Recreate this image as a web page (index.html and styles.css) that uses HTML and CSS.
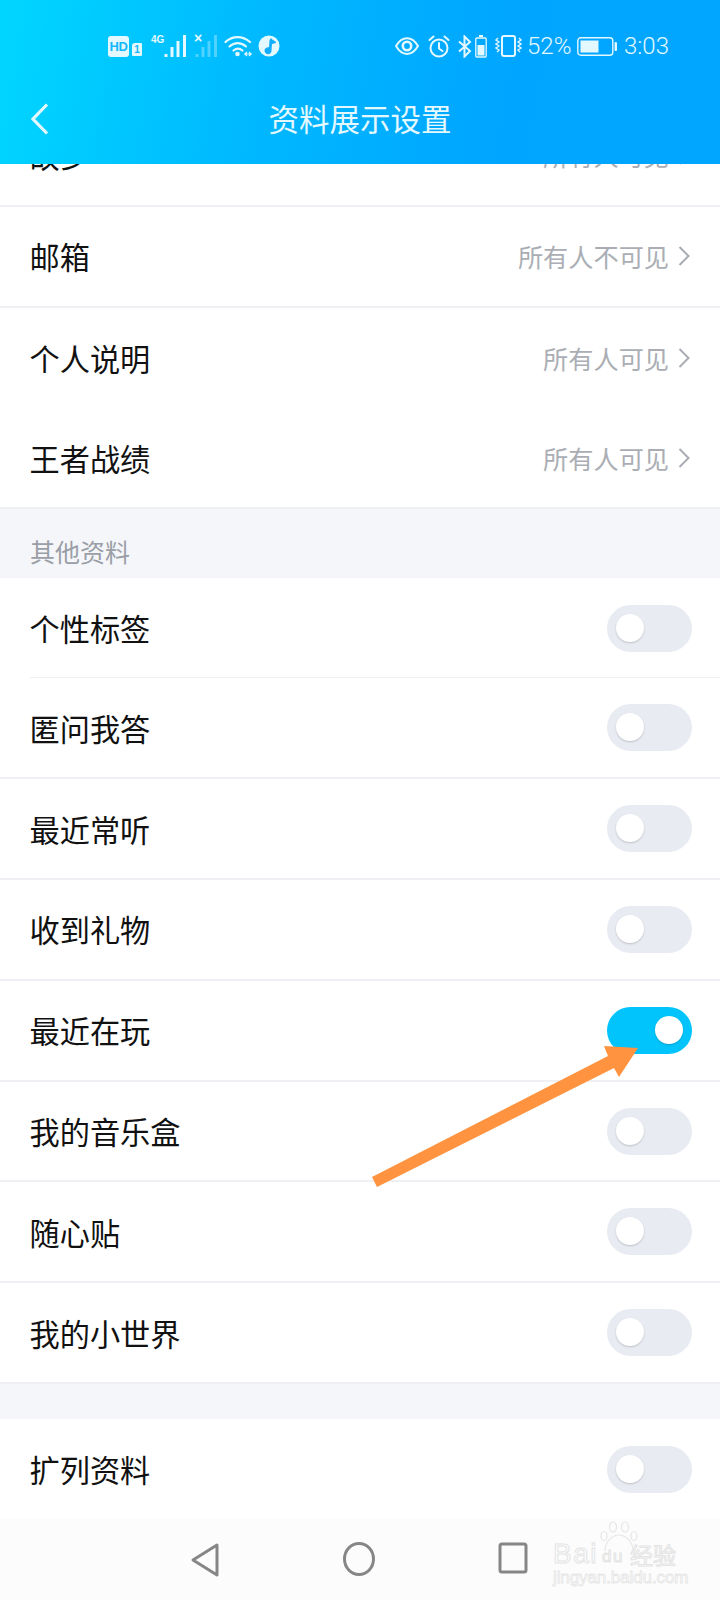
FILE: index.html
```html
<!DOCTYPE html>
<html lang="zh-CN">
<head>
<meta charset="utf-8">
<title>资料展示设置</title>
<link rel="stylesheet" href="styles.css">
</head>
<body>
<div class="phone">
  <header class="header">
    <div class="status">
      <div class="status-group">
        <span class="hd">HD</span>
        <span class="sim">1</span>
        <span class="net"><span class="net-label">4G</span>
          <svg width="24" height="23" viewBox="0 0 24 23"><path d="M2 19v3M8 12v10M14 6v16M20.500 0v22" stroke="#e3f8ff" stroke-width="3" fill="none"/></svg>
        </span>
        <span class="net net-off"><span class="net-x">×</span>
          <svg width="24" height="23" viewBox="0 0 24 23"><path d="M2 19v3M8 12v10M14 6v16M20.500 0v22" stroke="#e3f8ff" stroke-width="3" fill="none" opacity=".35"/></svg>
        </span>
        <svg class="wifi" width="28" height="22" viewBox="0 0 28 22"><g fill="none" stroke="#e3f8ff" stroke-width="2.200" stroke-linecap="round"><path d="M1.500 7C8.500 .5 18.500 .5 26 7"/><path d="M5.500 11.500c5-4.500 11.500-4.500 16.500 0"/><path d="M9.500 15.500c3-2.400 6-2.400 9 0"/></g><circle cx="13.500" cy="19" r="2.300" fill="#e3f8ff"/><path d="M20 19h8M23 17l-2 2 2 2M25 17l2 2-2 2" stroke="#e3f8ff" stroke-width="1.200" fill="none"/></svg>
        <svg class="globe" width="22" height="22" viewBox="0 0 22 22"><circle cx="11" cy="11" r="10.500" fill="#e3f8ff"/><path d="M13 3c2 3 5 2.500 5 5l-4 1-.5 6.500a3.500 3.500 0 1 1-2.500-3.200l.5-7z" fill="#12aefc"/></svg>
      </div>
      <div class="status-group status-right">
        <svg width="24" height="18" viewBox="0 0 24 18"><path d="M1 9c6-10.500 16-10.500 22 0C17 19.500 7 19.500 1 9z" fill="none" stroke="#e3f8ff" stroke-width="2"/><circle cx="12" cy="9" r="4.200" fill="none" stroke="#e3f8ff" stroke-width="2.600"/></svg>
        <svg class="alarm" width="22" height="23" viewBox="0 0 22 23"><g fill="none" stroke="#e3f8ff" stroke-width="2" stroke-linecap="round"><circle cx="11" cy="13" r="8.500"/><path d="M11 8v5.500l3.500 2.500M1.500 5 5.500 1.500M20.500 5l-4-3.500"/></g></svg>
        <svg class="bt" width="15" height="23" viewBox="0 0 15 23"><path d="M1 6.500 12 16l-5.500 5.500v-20L12 7 1 16.500" fill="none" stroke="#e3f8ff" stroke-width="2"/></svg>
        <svg class="mini-batt" width="12" height="23" viewBox="0 0 12 23"><path d="M4 1h4" stroke="#e3f8ff" stroke-width="2"/><rect x=".8" y="3" width="10.400" height="19" rx="1" fill="none" stroke="#e3f8ff" stroke-width="1.300"/><rect x="2.500" y="10" width="7" height="10.500" fill="#e3f8ff"/></svg>
        <svg class="vib" width="27" height="22" viewBox="0 0 27 22"><rect x="7" y="1" width="13" height="20" rx="2" fill="none" stroke="#e3f8ff" stroke-width="2"/><path d="M3 3 1 5l3 2-3 2 3 2-3 2 3 2-2 2M24 3l2 2-3 2 3 2-3 2 3 2-3 2 2 2" fill="none" stroke="#e3f8ff" stroke-width="1.400"/></svg>
        <span class="pct">52%</span>
        <svg class="batt" width="40" height="19" viewBox="0 0 40 19"><rect x=".8" y=".8" width="35" height="17.400" rx="3" fill="none" stroke="#e3f8ff" stroke-width="1.400"/><rect x="3.500" y="3.500" width="18" height="12" fill="#e3f8ff"/><rect x="37.500" y="5" width="2.500" height="9" rx="1" fill="#e3f8ff"/></svg>
        <span class="clock">3:03</span>
      </div>
    </div>
    <div class="titlebar">
      <svg class="back" width="18" height="32" viewBox="0 0 18 32"><path d="M16 1.500 2 16l14 14.500" fill="none" stroke="#e3f8ff" stroke-width="3.200"/></svg>
      <h1 class="title">资料展示设置</h1>
    </div>
  </header>

  <main class="list">
    <div class="row row-first row-line"><span class="label">故乡</span><span class="value">所有人可见<svg class="chev" width="12" height="20" viewBox="0 0 12 20"><path d="M1.500 1 10.500 10l-9 9" fill="none" stroke="#a9adb3" stroke-width="2"/></svg></span></div>
    <div class="row row-line"><span class="label">邮箱</span><span class="value">所有人不可见<svg class="chev" width="12" height="20" viewBox="0 0 12 20"><path d="M1.500 1 10.500 10l-9 9" fill="none" stroke="#a9adb3" stroke-width="2"/></svg></span></div>
    <div class="row"><span class="label">个人说明</span><span class="value">所有人可见<svg class="chev" width="12" height="20" viewBox="0 0 12 20"><path d="M1.500 1 10.500 10l-9 9" fill="none" stroke="#a9adb3" stroke-width="2"/></svg></span></div>
    <div class="row row-line"><span class="label">王者战绩</span><span class="value">所有人可见<svg class="chev" width="12" height="20" viewBox="0 0 12 20"><path d="M1.500 1 10.500 10l-9 9" fill="none" stroke="#a9adb3" stroke-width="2"/></svg></span></div>

    <div class="section">其他资料</div>

    <div class="row row-inset"><span class="label">个性标签</span><span class="toggle"><span class="knob"></span></span></div>
    <div class="row row-line"><span class="label">匿问我答</span><span class="toggle"><span class="knob"></span></span></div>
    <div class="row row-line"><span class="label">最近常听</span><span class="toggle"><span class="knob"></span></span></div>
    <div class="row row-line"><span class="label">收到礼物</span><span class="toggle"><span class="knob"></span></span></div>
    <div class="row row-line"><span class="label">最近在玩</span><span class="toggle toggle-on"><span class="knob"></span></span></div>
    <div class="row row-line"><span class="label">我的音乐盒</span><span class="toggle"><span class="knob"></span></span></div>
    <div class="row row-line"><span class="label">随心贴</span><span class="toggle"><span class="knob"></span></span></div>
    <div class="row row-line"><span class="label">我的小世界</span><span class="toggle"><span class="knob"></span></span></div>

    <div class="spacer"></div>

    <div class="row"><span class="label">扩列资料</span><span class="toggle"><span class="knob"></span></span></div>
  </main>

  <nav class="navbar">
    <svg width="30" height="36" viewBox="0 0 30 36"><path d="M27 3 3 18l24 15z" fill="none" stroke="#868686" stroke-width="3" stroke-linejoin="round"/></svg>
    <svg width="32" height="34" viewBox="0 0 32 34"><ellipse cx="16" cy="17" rx="14.500" ry="15.500" fill="none" stroke="#868686" stroke-width="3"/></svg>
    <svg width="30" height="32" viewBox="0 0 30 32"><rect x="2" y="2" width="26" height="28" rx="2" fill="none" stroke="#868686" stroke-width="3"/></svg>
  </nav>

  <svg class="arrow" width="720" height="1600" viewBox="0 0 720 1600"><polygon points="372,1177 608,1056 604,1046 638,1048 619,1077 614,1068 377,1187" fill="#ff9340"/></svg>

  <div class="mark">
    <svg class="paw" width="40" height="32" viewBox="0 0 40 32"><g fill="none" stroke="#e6e6e6" stroke-width="1.200"><ellipse cx="5" cy="15" rx="3" ry="4.500"/><ellipse cx="14" cy="6" rx="3.500" ry="5"/><ellipse cx="26" cy="6" rx="3.500" ry="5"/><ellipse cx="35" cy="15" rx="3" ry="4.500"/><path d="M6 30c0-11 9-16 14-16s14 5 14 16"/></g></svg>
    <div class="mark-main"><span>Bai</span><span class="mark-du">du</span><span class="mark-cn">经验</span></div>
    <div class="mark-url">jingyan.baidu.com</div>
  </div>
</div>
</body>
</html>
```
FILE: styles.css
```css
* { box-sizing: border-box; }
html, body { margin: 0; padding: 0; }
body { width: 720px; height: 1600px; overflow: hidden; background: #fff; font-family: "Noto Sans CJK SC", "Noto Sans", sans-serif; }
.phone { position: relative; width: 720px; height: 1600px; display: flex; flex-direction: column; overflow: hidden; }

.header { flex: 0 0 164px; display: flex; flex-direction: column; background: linear-gradient(100deg, #00d6ff 0%, #00b9ff 35%, #00a5ff 70%, #00a6ff 100%); color: #e3f8ff; position: relative; z-index: 2; }
.status { height: 92px; padding: 0 51px 0 108px; display: flex; justify-content: space-between; align-items: center; }
.status-group { display: flex; align-items: center; }
.hd { width: 21px; height: 21px; border-radius: 3px; background: #e3f8ff; color: #14b8fc; font: 700 13px/21px "Liberation Sans", sans-serif; text-align: center; letter-spacing: -.5px; }
.sim { width: 10px; height: 13px; margin: 6px 0 0 3px; border-radius: 3px 1px 1px 1px; background: #e3f8ff; color: #14b4fd; font: 700 10px/13px "Liberation Sans", sans-serif; text-align: center; }
.net { position: relative; display: flex; margin-left: 22px; }
.net-off { margin-left: 7px; }
.net-label { position: absolute; left: -13px; top: -1px; font: 700 10px/12px "Liberation Sans", sans-serif; }
.net-x { position: absolute; left: -1px; top: -4px; font: 700 14px/14px "Liberation Sans", sans-serif; }
.wifi { margin-left: 5px; }
.globe { margin-left: 6px; }
.alarm { margin-left: 9px; }
.bt { margin-left: 8px; }
.mini-batt { margin-left: 2px; }
.vib { margin-left: 8px; }
.pct { margin-left: 5px; width: 44px; font: 300 24px/28px Roboto, sans-serif; }
.batt { margin-left: 6px; }
.clock { margin-left: 7px; font: 300 24px/28px Roboto, sans-serif; }
.titlebar { position: relative; height: 72px; display: flex; align-items: flex-start; justify-content: center; }
.back { position: absolute; left: 31px; top: 11px; }
.title { margin: 0; font-weight: 400; font-size: 30.500px; line-height: 52px; color: #e3f8ff; }

.list { flex: 1 1 0; overflow: hidden; background: #fff; }
.row { height: 100.800px; padding: 0 28px 0 29.500px; display: flex; align-items: center; justify-content: space-between; position: relative; }
.row-first { margin-top: -58px; }
.row-line { border-bottom: 2px solid #eff0f3; }
.row-inset::after { content: ""; position: absolute; left: 30px; right: 0; bottom: 0; height: 1px; background: #eff0f3; }
.label { font-size: 30.200px; line-height: 40px; color: #111; }
.value { display: flex; align-items: center; margin-right: 2px; font-size: 25.200px; line-height: 34px; color: #aaaeb4; }
.chev { margin-left: 9px; }

.section { height: 68.500px; padding: 23.500px 30px 0; background: #f5f6fa; font-size: 25px; line-height: 36px; color: #9a9ea6; }
.spacer { height: 35px; background: #f5f6fa; }

.toggle { width: 85px; height: 47px; padding: 9px; border-radius: 24px; background: #e9ebf2; display: flex; justify-content: flex-start; }
.toggle-on { background: #00c4fb; justify-content: flex-end; }
.knob { width: 28px; height: 28px; border-radius: 50%; background: #fff; box-shadow: 0 1px 2px rgba(0,0,0,.18); }

.navbar { flex: 0 0 81px; display: flex; align-items: flex-start; background: #fcfcfc; padding: 23px 0 0 190px; gap: 123px; }

.arrow { position: absolute; left: 0; top: 0; pointer-events: none; z-index: 3; }

.mark { position: absolute; left: 553px; top: 1521px; width: 127px; height: 65px; color: #fdfdfd; z-index: 3; }
.paw { position: absolute; left: 46px; top: 0; }
.mark-main { position: absolute; left: 0; top: 14px; display: flex; align-items: center; font: 400 28px/32px "Liberation Sans", sans-serif; letter-spacing: 1.500px; -webkit-text-stroke: 1px #e4e4e4; }
.mark-du { font-size: 17px; margin: 6px 6px 0 4px; }
.mark-cn { font: 400 23px/32px "Noto Sans CJK SC", sans-serif; letter-spacing: 0; }
.mark-url { position: absolute; left: 0; top: 48px; font: 400 17px/18px "Liberation Sans", sans-serif; letter-spacing: -.1px; white-space: nowrap; color: #fcfcfc; -webkit-text-stroke: .8px #e6e6e6; }
```
